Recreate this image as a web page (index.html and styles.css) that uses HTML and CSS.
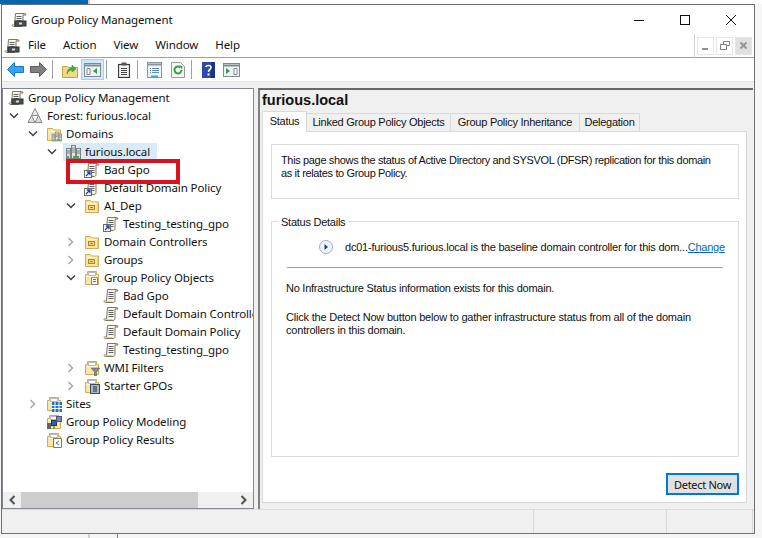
FILE: index.html
```html
<!DOCTYPE html>
<html>
<head>
<title>Group Policy Management</title>
<link rel="stylesheet" href="styles.css">
</head>
<body>
<svg class="defs" width="0" height="0">
<symbol id="scroll" viewBox="0 0 16 16">
<path d="M4.500 1.500h9c-1 .6-1.500 1.400-1.500 2.500v8.500c0 1.200-.8 2-2 2H2.500c-1 0-1.500-.7-1.500-1.500h2.500z" fill="#fbf6e2" stroke="#7d785e"/>
<path d="M5.500 4.500h5M5.500 6.500h5M5.500 8.500h5M5.500 10.500h5" stroke="#5e6468"/>
<path d="M13.500 1.500c1 0 1.500.6 1.500 1.500h-3" fill="#e9dfb5" stroke="#7d785e"/>
<path d="M1.500 13.500h8" stroke="#d9cf9f"/>
</symbol>
<symbol id="link" viewBox="0 0 16 16">
<rect x=".5" y="8.500" width="7" height="7" fill="#fff" stroke="#6a6a6a"/>
<path d="M2 14l3.500-3.500M2.800 10h3.200v3.200" fill="none" stroke="#1f3fa8" stroke-width="1.300"/>
</symbol>
<symbol id="lockbox" viewBox="0 0 16 16">
<rect x="4" y="9" width="11" height="5" fill="#4a4f52" stroke="#2f3336"/>
<rect x="8" y="10.500" width="3" height="2" fill="#d6d6d6"/>
</symbol>
<symbol id="folder" viewBox="0 0 16 16">
<path d="M1.500 2.500h5l1.500 1.500h6.500v10.500h-13z" fill="#f8e6a6" stroke="#d0ad55"/>
<path d="M2.500 5.500h11" stroke="#fdf6d8"/>
<path d="M13.500 5v9" stroke="#e9cc7c"/>
</symbol>
<symbol id="ou" viewBox="0 0 16 16">
<rect x="4.500" y="7.500" width="6" height="4" fill="#f3d477" stroke="#a98a3a"/>
<path d="M6.500 9.500h2" stroke="#7d6526"/>
</symbol>
<symbol id="folder-doc" viewBox="0 0 16 16">
<path d="M1.500 4.500h2v-3h9v3h2v10h-13z" fill="#f8e6a6" stroke="#d0ad55"/>
<path d="M4.500 2.500h7v3h-7z" fill="#fff" stroke="#b9b9b9"/>
<path d="M2.500 6.500h11" stroke="#fdf6d8"/>
</symbol>
<symbol id="servers" viewBox="0 0 16 16">
<rect x="1.500" y="4.500" width="4" height="10" fill="#d8dcdb" stroke="#7b8280"/>
<rect x="6.500" y="1.500" width="4" height="13" fill="#e2e5e4" stroke="#7b8280"/>
<rect x="11.500" y="4.500" width="4" height="10" fill="#d8dcdb" stroke="#7b8280"/>
<path d="M2 7h3M2 9h3M7 4h3M7 6h3M7 8h3M12 7h3M12 9h3" stroke="#7b8280"/>
<path d="M2 13h2M8 13h2M12 13h2" stroke="#35b835" stroke-width="2"/>
</symbol>
<symbol id="forest" viewBox="0 0 16 16">
<path d="M8 .5l3.500 7h-7z" fill="#e8e8e8" stroke="#8a8a8a"/>
<path d="M4.500 7.500l3.500 7H1z" fill="#dcdcdc" stroke="#8a8a8a"/>
<path d="M11.500 7.500l3.500 7H8z" fill="#dcdcdc" stroke="#8a8a8a"/>
</symbol>
<symbol id="chev-open" viewBox="0 0 10 8"><path d="M1 1.500l4 4 4-4" fill="none" stroke="#404040" stroke-width="1.500"/></symbol>
<symbol id="chev-shut" viewBox="0 0 8 10"><path d="M1.500 1l4 4-4 4" fill="none" stroke="#a6a6a6" stroke-width="1.500"/></symbol>
</svg>

<div class="backdrop-top"><span class="bd-blue"></span><span class="bd-gap"></span></div>

<div class="window">
<div class="titlebar">
<svg class="ico title-ico"><use href="#scroll"/><use href="#lockbox"/></svg>
<span class="title-text">Group Policy Management</span>
<div class="caption-btns">
<span class="cap"><svg width="12" height="12"><path d="M1 6.500h10" stroke="#111"/></svg></span>
<span class="cap"><svg width="12" height="12"><rect x="1.500" y="1.500" width="9" height="9" fill="none" stroke="#111"/></svg></span>
<span class="cap"><svg width="12" height="12"><path d="M1 1l10 10M11 1L1 11" stroke="#111"/></svg></span>
</div>
</div>

<div class="menubar">
<div class="menu-left">
<svg class="ico menu-ico"><use href="#scroll"/><use href="#lockbox"/></svg>
<span class="menu-item">File</span>
<span class="menu-item">Action</span>
<span class="menu-item">View</span>
<span class="menu-item">Window</span>
<span class="menu-item">Help</span>
</div>
<div class="mdi">
<span class="mdi-btn"><svg width="10" height="10"><path d="M1 8h6" stroke="#8a9299" stroke-width="2"/></svg></span>
<span class="mdi-btn"><svg width="10" height="10"><path d="M3.500 3V.5h6v4H7M.5 3.500h6v5h-6z" fill="none" stroke="#7b838a"/></svg></span>
<span class="mdi-btn mdi-close"><svg width="10" height="10"><path d="M1.500 1.500l6 6M7.500 1.500l-6 6" stroke="#8f979e" stroke-width="2"/></svg></span>
</div>
</div>

<div class="toolbar">
<span class="tool"><svg width="17" height="15"><path d="M.5 7.500l7-7v4h9v6h-9v4z" fill="#36a3ee" stroke="#1877c9"/></svg></span>
<span class="tool"><svg width="17" height="15"><path d="M16.500 7.500l-7-7v4h-9v6h9v4z" fill="#808080" stroke="#5e5e5e"/></svg></span>
<span class="tool-sep"></span>
<span class="tool"><svg width="16" height="16"><path d="M.5 4.500h5l1 1h9v10H.5z" fill="#f5d88a" stroke="#c2a04a"/><path d="M5 12c0-4 2-6 5-6V3l4 4-4 3V8c-2 0-4 1-5 4z" fill="#3fae49" stroke="#2a8a35" stroke-width=".5"/></svg></span>
<span class="tool tool-on"><svg width="17" height="14"><rect x=".5" y=".5" width="16" height="13" fill="#eef3f5" stroke="#7f8b93"/><path d="M1 2.500h15" stroke="#7f8b93" stroke-width="2"/><path d="M3 5.500h3v6H3z" fill="#fff" stroke="#7f8b93"/><path d="M13 5v6l-4-3z" fill="#2e9e4a"/></svg></span>
<span class="tool-sep"></span>
<span class="tool"><svg width="12" height="16"><rect x=".5" y="2.500" width="11" height="13" fill="#f0f0f0" stroke="#3a3a3a" stroke-width="1.200"/><rect x="3.500" y=".5" width="5" height="3" fill="#555"/><path d="M3 6.500h6M3 8.500h6M3 10.500h6M3 12.500h6" stroke="#444"/></svg></span>
<span class="tool-sep"></span>
<span class="tool"><svg width="15" height="16"><rect x=".5" y=".5" width="14" height="15" fill="#f2f5f7" stroke="#8a949b"/><path d="M1 2.500h13" stroke="#8a949b" stroke-width="2"/><path d="M3 6.500h1M5 6.500h7M3 8.500h1M5 8.500h7M3 10.500h1M5 10.500h7" stroke="#5b8fb5"/><path d="M4 14.500h7" stroke="#2fa9e6" stroke-width="2"/></svg></span>
<span class="tool"><svg width="14" height="16"><path d="M.5.5h9l4 4v11H.5z" fill="#f5f5f5" stroke="#9a9a9a"/><path d="M10.500 8a3.500 3.500 0 1 1-1.200-2.700" fill="none" stroke="#2fa24a" stroke-width="2"/><path d="M8 3.500l3.500.5-.5 3.500z" fill="#2fa24a"/></svg></span>
<span class="tool-sep"></span>
<span class="tool"><svg width="13" height="16"><rect width="13" height="16" fill="#2c4aa6"/><rect x="9" width="4" height="16" fill="#1d3284"/><path d="M4 5c0-2 5-2 5 .5C9 7.500 6.500 7.500 6.500 10" fill="none" stroke="#fff" stroke-width="1.600"/><rect x="5.500" y="11.500" width="2" height="2" fill="#fff"/></svg></span>
<span class="tool"><svg width="17" height="14"><rect x=".5" y=".5" width="16" height="13" fill="#eef3f5" stroke="#7f8b93"/><path d="M1 2.500h15" stroke="#7f8b93" stroke-width="2"/><path d="M3 5v6l4-3z" fill="#2e9e4a"/><path d="M11 5.500h3v6h-3z" fill="#fff" stroke="#7f8b93"/></svg></span>
</div>

<div class="main">
<div class="tree-pane">
<div class="tree">
<div class="row lv0"><svg class="ico"><use href="#scroll"/><use href="#lockbox"/></svg><span class="label">Group Policy Management</span></div>
<div class="row lv1"><svg class="chev"><use href="#chev-open"/></svg><svg class="ico"><use href="#forest"/></svg><span class="label">Forest: furious.local</span></div>
<div class="row lv2"><svg class="chev"><use href="#chev-open"/></svg><svg class="ico"><use href="#folder"/><svg x="5" y="5" width="11" height="11" viewBox="0 0 16 16"><use href="#servers"/></svg></svg><span class="label">Domains</span></div>
<div class="row lv3"><svg class="chev"><use href="#chev-open"/></svg><span class="selected"><svg class="ico"><use href="#servers"/></svg><span class="label">furious.local</span></span></div>
<div class="row lv4"><span class="no-chev"></span><svg class="ico"><use href="#scroll"/><use href="#link"/></svg><span class="label">Bad Gpo</span></div>
<div class="row lv4"><span class="no-chev"></span><svg class="ico"><use href="#scroll"/><use href="#link"/></svg><span class="label">Default Domain Policy</span></div>
<div class="row lv4"><svg class="chev"><use href="#chev-open"/></svg><svg class="ico"><use href="#folder"/><use href="#ou"/></svg><span class="label">AI_Dep</span></div>
<div class="row lv5"><span class="no-chev"></span><svg class="ico"><use href="#scroll"/><use href="#link"/></svg><span class="label">Testing_testing_gpo</span></div>
<div class="row lv4"><svg class="chev chev-s"><use href="#chev-shut"/></svg><svg class="ico"><use href="#folder"/><use href="#ou"/></svg><span class="label">Domain Controllers</span></div>
<div class="row lv4"><svg class="chev chev-s"><use href="#chev-shut"/></svg><svg class="ico"><use href="#folder"/><use href="#ou"/></svg><span class="label">Groups</span></div>
<div class="row lv4"><svg class="chev"><use href="#chev-open"/></svg><svg class="ico"><use href="#folder-doc"/><path d="M7.500 7.500h6v7h-6z" fill="#fdfbf2" stroke="#8f8a70"/><path d="M9 9.500h3M9 11.500h3" stroke="#6f7478"/></svg><span class="label">Group Policy Objects</span></div>
<div class="row lv5"><span class="no-chev"></span><svg class="ico"><use href="#scroll"/></svg><span class="label">Bad Gpo</span></div>
<div class="row lv5"><span class="no-chev"></span><svg class="ico"><use href="#scroll"/></svg><span class="label">Default Domain Controllers Policy</span></div>
<div class="row lv5"><span class="no-chev"></span><svg class="ico"><use href="#scroll"/></svg><span class="label">Default Domain Policy</span></div>
<div class="row lv5"><span class="no-chev"></span><svg class="ico"><use href="#scroll"/></svg><span class="label">Testing_testing_gpo</span></div>
<div class="row lv4"><svg class="chev chev-s"><use href="#chev-shut"/></svg><svg class="ico"><use href="#folder-doc"/><path d="M7 8h9l-3.500 4v4h-2v-4z" fill="#7c8a94" stroke="#4f5a62" stroke-width=".5"/></svg><span class="label">WMI Filters</span></div>
<div class="row lv4"><svg class="chev chev-s"><use href="#chev-shut"/></svg><svg class="ico"><use href="#folder-doc"/><rect x="6.500" y="6.500" width="9" height="9" fill="#a9b8c6" stroke="#3f4c5a"/><path d="M9 9h4M9 11h4M9 13h4" stroke="#26323d"/></svg><span class="label">Starter GPOs</span></div>
<div class="row lv2"><svg class="chev chev-s"><use href="#chev-shut"/></svg><svg class="ico"><use href="#folder-doc"/><rect x="6" y="6" width="10" height="10" fill="#1e72c4"/><path d="M9 6v10M13 6v10M6 9.500h10M6 12.500h10" stroke="#fff"/></svg><span class="label">Sites</span></div>
<div class="row lv2"><span class="no-chev"></span><svg class="ico"><use href="#folder-doc"/><rect x="1" y="9" width="4" height="6" fill="#5a6a5a"/><rect x="5.500" y="6.500" width="5" height="5" fill="#2f5fae" stroke="#23344f"/><rect x="10.500" y="2.500" width="5" height="5" fill="#6d8fc4" stroke="#4a5568"/><path d="M8 12v3" stroke="#555"/></svg><span class="label">Group Policy Modeling</span></div>
<div class="row lv2"><span class="no-chev"></span><svg class="ico"><use href="#folder-doc"/><path d="M7.500 6.500h8v9h-8z" fill="#fff" stroke="#7a7a7a"/><path d="M13 9l-3 2 3 2" fill="none" stroke="#3a8a4a"/></svg><span class="label">Group Policy Results</span></div>
</div>
<div class="hscroll">
<span class="arrow"><svg width="8" height="10"><path d="M6.500 1l-4 4 4 4" fill="none" stroke="#505050" stroke-width="2"/></svg></span>
<span class="thumb"></span>
<span class="track"></span>
<span class="arrow"><svg width="8" height="10"><path d="M1.500 1l4 4-4 4" fill="none" stroke="#505050" stroke-width="2"/></svg></span>
</div>
</div>

<div class="detail-pane">
<h1 class="detail-title">furious.local</h1>
<div class="tabs">
<span class="tab tab-on">Status</span>
<span class="tab tab-linked">Linked Group Policy Objects</span>
<span class="tab tab-inherit">Group Policy Inheritance</span>
<span class="tab tab-deleg">Delegation</span>
</div>
<div class="tab-panel">
<div class="intro">
<p>This page shows the status of Active Directory and SYSVOL (DFSR) replication for this domain<br>as it relates to Group Policy.</p>
</div>
<div class="group">
<span class="legend">Status Details</span>
<div class="baseline">
<svg class="expander" width="16" height="16"><circle cx="8" cy="8" r="6.500" fill="#eef2fa" stroke="#a4b0c8"/><path d="M6.500 5v6L10 8z" fill="#2f3f66"/></svg>
<span class="baseline-text">dc01-furious5.furious.local is the baseline domain controller for this dom...</span><a class="change" href="#">Change</a>
</div>
<div class="rule"></div>
<p class="note note-first">No Infrastructure Status information exists for this domain.</p>
<p class="note note-wide">Click the Detect Now button below to gather infrastructure status from all of the domain<br>controllers in this domain.</p>
</div>
<div class="actions"><button class="detect">Detect Now</button></div>
</div>
</div>
</div>

<div class="statusbar">
<span class="st st-a"></span><span class="st st-b"></span><span class="st st-c"></span>
</div>
</div>

<div class="backdrop-bottom"><span class="bb-a"></span><span class="bb-b"></span></div>

<div class="callout"></div>
</body>
</html>
```

FILE: styles.css
```css
html, body {
  margin: 0;
  padding: 0;
}
body {
  position: relative;
  width: 762px;
  height: 538px;
  overflow: hidden;
  background-color: #f6f6f6;
  font-family: "Noto Sans", sans-serif;
  font-size: 11.5px;
  letter-spacing: -0.1px;
  color: #111;
}
.defs {
  position: absolute;
}
.ico {
  width: 16px;
  height: 16px;
  flex: none;
}

/* bits of the desktop around the window */
.backdrop-top {
  display: flex;
  height: 4px;
  background-color: #fff;
}
.bd-blue {
  width: 88px;
  background-color: #0067b0;
}
.bd-gap {
  width: 2px;
  background-color: #d0d0d0;
}
.backdrop-bottom {
  display: flex;
  height: 4px;
}
.bb-a {
  width: 88px;
  border-right: 2px solid #d0d0d0;
}
.bb-b {
  width: 27px;
  border-right: 1px solid #808080;
}

.window {
  display: flex;
  flex-direction: column;
  box-sizing: border-box;
  width: 754px;
  height: 530px;
  margin-left: 1px;
  border: 1px solid #707070;
  background-color: #fff;
}

.titlebar {
  display: flex;
  align-items: center;
  height: 29px;
  flex: none;
}
.title-ico {
  margin-left: 9px;
}
.title-text {
  margin-left: 4px;
  padding-bottom: 1px;
}
.caption-btns {
  display: flex;
  margin-left: auto;
}
.cap {
  display: flex;
  align-items: center;
  justify-content: center;
  width: 46px;
  height: 29px;
}

.menubar {
  display: flex;
  height: 24px;
  flex: none;
}
.menu-left {
  display: flex;
  align-items: center;
  width: 693px;
  box-sizing: border-box;
  border-bottom: 1px solid #a0a0a0;
  border-right: 1px solid #d0d0d0;
}
.menu-ico {
  margin: 0 8px 0 2px;
}
.menu-item {
  margin-right: 17px;
  padding-bottom: 2px;
}
.mdi {
  display: flex;
  align-items: center;
  gap: 2px;
  flex: 1;
  padding-left: 2px;
  border-bottom: 1px solid #a0a0a0;
}
.mdi-btn {
  display: flex;
  align-items: center;
  justify-content: center;
  box-sizing: border-box;
  width: 17px;
  height: 18px;
  border: 1px solid #e6e6e6;
}
.mdi-close {
  background-color: #e0e0e0;
}

.toolbar {
  display: flex;
  align-items: center;
  height: 23px;
  flex: none;
  padding-left: 2px;
  border-bottom: 1px solid #e3e3e3;
}
.tool {
  display: flex;
  align-items: center;
  justify-content: center;
  box-sizing: border-box;
  width: 23px;
  height: 21px;
}
.tool-on {
  background-color: #cce8ff;
  border: 1px solid #99d1ff;
}
.tool-sep {
  width: 1px;
  height: 19px;
  margin: 0 5px 0 2px;
  background-color: #a0a0a0;
}

.main {
  display: flex;
  flex: 1;
  min-height: 0;
  padding-top: 6px;
  background-color: #f0f0f0;
}

.tree-pane {
  display: flex;
  flex-direction: column;
  box-sizing: border-box;
  width: 252px;
  flex: none;
  border: 1px solid #828790;
  background-color: #fff;
}
.tree {
  flex: 1;
  overflow: hidden;
  white-space: nowrap;
}
.row {
  display: flex;
  align-items: center;
  height: 18px;
}
.lv0 { padding-left: 5px; }
.lv1 { padding-left: 0; }
.lv2 { padding-left: 19px; }
.lv3 { padding-left: 38px; }
.lv4 { padding-left: 57px; }
.lv5 { padding-left: 76px; }
.chev {
  width: 10px;
  height: 8px;
  margin: 0 8px 0 6px;
  flex: none;
}
.chev-s {
  width: 8px;
  height: 10px;
  margin: 0 9px 0 7px;
}
.no-chev {
  width: 24px;
  flex: none;
}
.label {
  margin-left: 4px;
  padding-bottom: 2px;
}
.selected {
  display: flex;
  align-items: center;
  height: 18px;
  margin-left: -2px;
  padding: 0 7px 0 2px;
  background-color: #d9ebf9;
}
.hscroll {
  display: flex;
  height: 16px;
  flex: none;
  background-color: #f0f0f0;
}
.arrow {
  display: flex;
  align-items: center;
  justify-content: center;
  width: 18px;
}
.thumb {
  width: 177px;
  background-color: #cdcdcd;
}
.track {
  flex: 1;
}

.detail-pane {
  display: flex;
  flex-direction: column;
  box-sizing: border-box;
  width: 495px;
  margin-left: 4px;
  padding: 0 6px 6px 2px;
  border-left: 2px solid #808080;
  border-top: 2px solid #696969;
  font-family: "Liberation Sans", sans-serif;
  font-size: 11px;
  letter-spacing: -0.25px;
}
.detail-title {
  margin: 1px 0 0 0;
  height: 18px;
  font-size: 14.5px;
  line-height: 18px;
  font-weight: bold;
  letter-spacing: 0;
}
.tabs {
  display: flex;
  align-items: flex-end;
  height: 21px;
  flex: none;
  margin-top: 1px;
  white-space: nowrap;
}
.tab {
  box-sizing: border-box;
  height: 18px;
  border: 1px solid #d9d9d9;
  border-bottom: none;
  border-left: none;
  line-height: 17px;
  text-align: center;
}
.tab-on {
  position: relative;
  width: 45px;
  height: 21px;
  margin-bottom: -1px;
  border-left: 1px solid #d9d9d9;
  background-color: #fff;
  line-height: 19px;
}
.tab-linked { width: 144px; }
.tab-inherit { width: 129px; }
.tab-deleg { width: 60px; }
.tab-panel {
  display: flex;
  flex-direction: column;
  flex: 1;
  min-height: 0;
  padding: 12px 7px 8px 8px;
  border: 1px solid #d9d9d9;
  background-color: #fff;
}
.intro {
  box-sizing: border-box;
  height: 55px;
  flex: none;
  padding: 9px 9px 8px;
  border: 1px solid #dcdcdc;
}
.intro p {
  margin: 0;
  line-height: 13px;
  letter-spacing: -0.35px;
}
.group {
  position: relative;
  box-sizing: border-box;
  height: 236px;
  flex: none;
  margin-top: 22px;
  padding: 0 15px;
  border: 1px solid #dcdcdc;
}
.legend {
  position: absolute;
  top: -7px;
  left: 6px;
  padding: 0 3px;
  background-color: #fff;
  line-height: 14px;
}
.baseline {
  display: flex;
  align-items: center;
  height: 18px;
  margin-top: 16px;
  white-space: nowrap;
}
.expander {
  margin-left: 31px;
  margin-right: 11px;
  flex: none;
}
.baseline-text {
  letter-spacing: -0.21px;
}
.change {
  color: #0066cc;
}
.rule {
  height: 1px;
  margin-top: 11px;
  background-color: #a0a0a0;
}
.note {
  margin: 0 0 16px -1px;
  line-height: 13px;
}
.note-first {
  margin-top: 14px;
}
.note-wide {
  letter-spacing: -0.2px;
}
.actions {
  display: flex;
  justify-content: flex-end;
  margin-top: 16px;
}
.detect {
  box-sizing: border-box;
  width: 73px;
  height: 22px;
  padding: 0;
  border: 2px solid #0078d7;
  background-color: #e1e1e1;
  font-family: "Noto Sans", sans-serif;
  font-size: 11px;
  letter-spacing: -0.3px;
  color: #111;
}

.statusbar {
  display: flex;
  height: 23px;
  flex: none;
  border-top: 1px solid #dcdcdc;
  background-color: #f0f0f0;
}
.st {
  border-right: 1px solid #d8d8d8;
}
.st-a { width: 531px; }
.st-b { width: 132px; }
.st-c { width: 85px; }

.callout {
  position: absolute;
  left: 66px;
  top: 159px;
  width: 114px;
  height: 25px;
  box-sizing: border-box;
  border: 4px solid #d9131e;
}
```
